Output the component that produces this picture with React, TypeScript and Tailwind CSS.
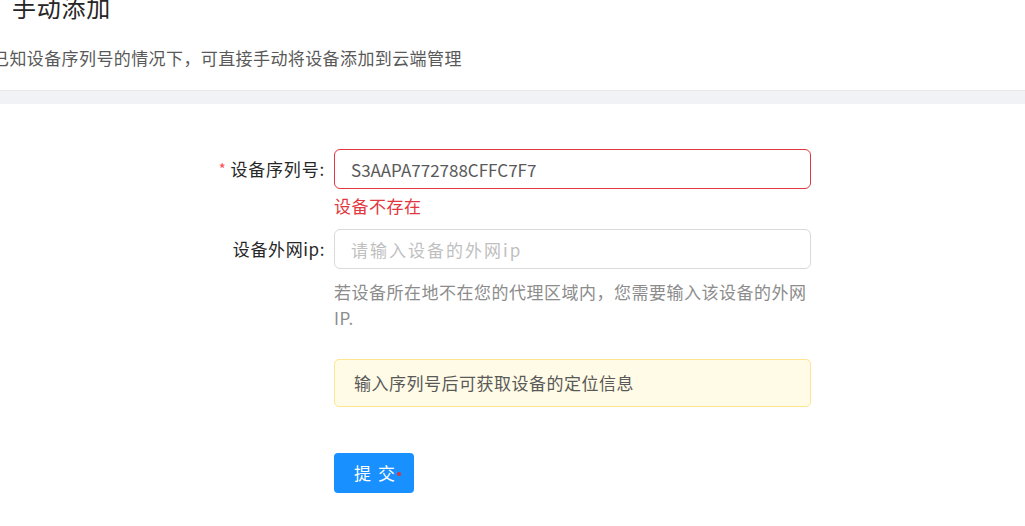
import { useState } from 'react';

const font = { fontFamily: '"Noto Sans CJK SC", "Noto Sans", sans-serif' };

export default function App() {
  const [serial, setSerial] = useState('S3AAPA772788CFFC7F7');
  const [ip, setIp] = useState('');

  return (
    <div className="h-[526px] w-[1025px] overflow-hidden bg-white" style={font}>
      <header className="flex h-[91px] flex-col border-b border-[#e8e8e8] bg-white">
        <h1 className="-mt-[9px] ml-[12px] text-[24px] leading-[32px] tracking-[0.75px] text-[#262626]">手动添加</h1>
        <p className="-ml-[8px] mt-[23px] whitespace-nowrap text-[17px] leading-[24px] tracking-[0.4px] text-[#595959]">
          已知设备序列号的情况下，可直接手动将设备添加到云端管理
        </p>
      </header>
      <div className="h-[13px] bg-[#f0f2f5]" />

      <form className="pt-[45px] tracking-[0.5px]" onSubmit={(e) => e.preventDefault()}>
        <div className="flex">
          <label className="flex h-[40px] w-[334px] items-center justify-end pr-[9px] text-[17px] tracking-[0.8px] text-[#262626]">
            <span className="mr-[4px] text-[15px] text-[#ff4d4f]">*</span>
            设备序列号:
          </label>
          <div className="w-[477px]">
            <input
              value={serial}
              onChange={(e) => setSerial(e.target.value)}
              className="h-[40px] w-full rounded-[6px] border border-[#e0383e] px-[16px] text-[17px] tracking-normal text-[#595959] outline-none"
            />
            <div className="h-[40px] pt-[4px] text-[17px] leading-[26px] text-[#e0383e]">设备不存在</div>
          </div>
        </div>

        <div className="flex">
          <label className="flex h-[40px] w-[334px] items-center justify-end pr-[9px] text-[17px] tracking-[0.6px] text-[#262626]">
            设备外网ip:
          </label>
          <div className="w-[477px]">
            <input
              value={ip}
              onChange={(e) => setIp(e.target.value)}
              placeholder="请输入设备的外网ip"
              className="h-[40px] w-full rounded-[6px] border border-[#d9d9d9] px-[16px] text-[17px] text-[#595959] outline-none placeholder:tracking-[2px] placeholder:text-[#bfbfbf]"
            />
            <p className="mt-[10px] text-[17px] leading-[26px] text-[#8c8c8c]">
              若设备所在地不在您的代理区域内，您需要输入该设备的外网IP.
            </p>
            <div className="mt-[28px] flex h-[48px] items-center rounded-[5px] border border-[#ffe58f] bg-[#fffbe6] px-[19px] text-[17px] text-[#595959]">
              输入序列号后可获取设备的定位信息
            </div>
            <button
              type="submit"
              className="mt-[46px] flex h-[40px] w-[80px] items-center rounded-[4px] bg-[#1890ff] pl-[20px] text-[17px] tracking-normal text-white"
            >
              <span>提</span>
              <span className="ml-[7px]">交</span>
              <span className="ml-[2px] mt-[2px] h-[4px] w-[4px] rounded-full bg-[#d9363e]" />
            </button>
          </div>
        </div>
      </form>
    </div>
  );
}
